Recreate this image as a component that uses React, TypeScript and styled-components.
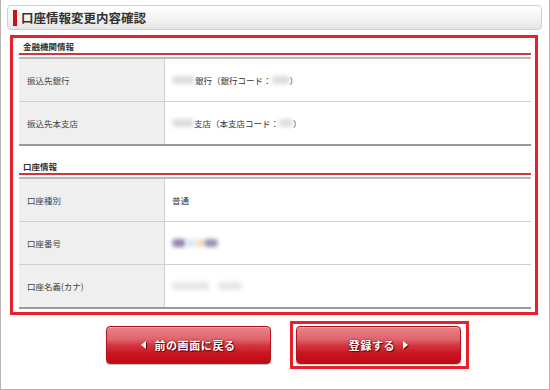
import { createGlobalStyle } from 'styled-components';
import styled from 'styled-components';

const GlobalStyle = createGlobalStyle`
  html, body {
    margin: 0;
    padding: 0;
    background: #fff;
  }
  body {
    font-family: "Noto Sans CJK JP", "Noto Sans", sans-serif;
  }
`;

const Frame = styled.div`
  width: 550px;
  height: 390px;
  box-sizing: border-box;
  border: 1px solid #b4b4b4;
  border-top: none;
  padding: 5px 7px 0 6px;
  background: #fff;
  display: flex;
  flex-direction: column;
`;

const TitleBar = styled.div`
  height: 25px;
  box-sizing: border-box;
  display: flex;
  align-items: center;
  padding-left: 5px;
  border: 1px solid #cfcfcf;
  border-radius: 4px;
  background: linear-gradient(to bottom, #ffffff 0%, #f4f4f4 50%, #e6e6e6 100%);
`;

const TitleMark = styled.span`
  width: 4px;
  height: 16px;
  background: #c0141e;
  margin-right: 4px;
`;

const Title = styled.h1`
  margin: 0;
  font-size: 12.5px;
  font-weight: bold;
  color: #333;
`;

const Highlight = styled.div`
  margin: 5px 4px 0 3px;
  border: 3px solid #ea1f2b;
  padding: 0 4px 3px 6px;
`;

const SectionTitle = styled.div<{ $first?: boolean }>`
  font-size: 8.5px;
  font-weight: bold;
  color: #333;
  padding: ${(p) => (p.$first ? '2px' : '14px')} 0 1px 4px;
  line-height: 12px;
  border-bottom: 2px solid #d6323a;
`;

const Table = styled.div`
  margin-top: 2px;
  border-top: 2px solid #b9b9b9;
  border-bottom: 2px solid #9a9a9a;
`;

const Row = styled.div`
  display: flex;
  height: 42px;
  border-bottom: 1px solid #cfcfcf;
  &:last-child {
    border-bottom: none;
  }
`;

const Label = styled.div`
  width: 146px;
  flex-shrink: 0;
  background: #efefef;
  border-right: 1px solid #cfcfcf;
  display: flex;
  align-items: center;
  padding-left: 8px;
  box-sizing: border-box;
  font-size: 8.5px;
  color: #444;
`;

const Value = styled.div`
  flex: 1;
  display: flex;
  align-items: center;
  padding-left: 7px;
  font-size: 8.5px;
  color: #333;
`;

const Blur = styled.span<{ $w: number; $color?: string }>`
  display: inline-block;
  width: ${(p) => p.$w}px;
  height: 8px;
  border-radius: 4px;
  background: ${(p) => p.$color ?? '#dcdcdc'};
  filter: blur(2px);
`;

const Buttons = styled.div`
  display: flex;
  align-items: center;
  padding-left: 99px;
  margin-top: 6px;
  gap: 19px;
`;

const Focus = styled.div`
  border: 3px solid #ea1f2b;
  padding: 2px 5px 2px 3px;
`;

const Button = styled.button`
  width: 165px;
  height: 38px;
  border: 1px solid #b3121c;
  border-radius: 4px;
  background: linear-gradient(
    to bottom,
    #e8848a 0%,
    #df636b 35%,
    #d3333d 52%,
    #c9141f 75%,
    #c00c16 100%
  );
  box-shadow: inset 0 1px 0 rgba(255, 255, 255, 0.35), 0 1px 1px rgba(0, 0, 0, 0.25);
  display: flex;
  align-items: center;
  justify-content: center;
  gap: 7px;
  color: #fff;
  font-family: "Noto Sans CJK JP", sans-serif;
  font-size: 11px;
  font-weight: bold;
  letter-spacing: 0.6px;
  text-shadow: 0 0 2px #6a0008, 1px 1px 1px #6a0008;
  cursor: pointer;
  padding: 0;
`;

const Arrow = ({ dir }: { dir: 'left' | 'right' }) => (
  <svg width="6" height="8" viewBox="0 0 6 8" style={{ filter: 'drop-shadow(1px 1px 0 #6a0008)' }}>
    {dir === 'left' ? (
      <polygon points="5,0 5,8 0,4" fill="#fff" />
    ) : (
      <polygon points="1,0 1,8 6,4" fill="#fff" />
    )}
  </svg>
);

export default function App() {
  return (
    <>
      <GlobalStyle />
      <Frame>
        <TitleBar>
          <TitleMark />
          <Title>口座情報変更内容確認</Title>
        </TitleBar>

        <Highlight>
          <SectionTitle $first>金融機関情報</SectionTitle>
          <Table>
            <Row>
              <Label>振込先銀行</Label>
              <Value>
                <Blur $w={23} />
                銀行（銀行コード：
                <Blur $w={18} />）
              </Value>
            </Row>
            <Row>
              <Label>振込先本支店</Label>
              <Value>
                <Blur $w={22} />
                支店（本支店コード：
                <Blur $w={14} />）
              </Value>
            </Row>
          </Table>

          <SectionTitle>口座情報</SectionTitle>
          <Table>
            <Row>
              <Label>口座種別</Label>
              <Value>普通</Value>
            </Row>
            <Row>
              <Label>口座番号</Label>
              <Value>
                <Blur $w={14} $color="#8f80ad" />
                <Blur $w={10} $color="#d6e6f0" />
                <Blur $w={8} $color="#f3d9b0" />
                <Blur $w={14} $color="#9a8fb3" />
              </Value>
            </Row>
            <Row>
              <Label>口座名義(カナ)</Label>
              <Value>
                <Blur $w={38} $color="#e6e6e6" />
                <Blur $w={8} $color="#fff" />
                <Blur $w={24} $color="#e6e6e6" />
              </Value>
            </Row>
          </Table>
        </Highlight>

        <Buttons>
          <Button type="button">
            <Arrow dir="left" />
            前の画面に戻る
          </Button>
          <Focus>
            <Button type="button">
              登録する
              <Arrow dir="right" />
            </Button>
          </Focus>
        </Buttons>
      </Frame>
    </>
  );
}
